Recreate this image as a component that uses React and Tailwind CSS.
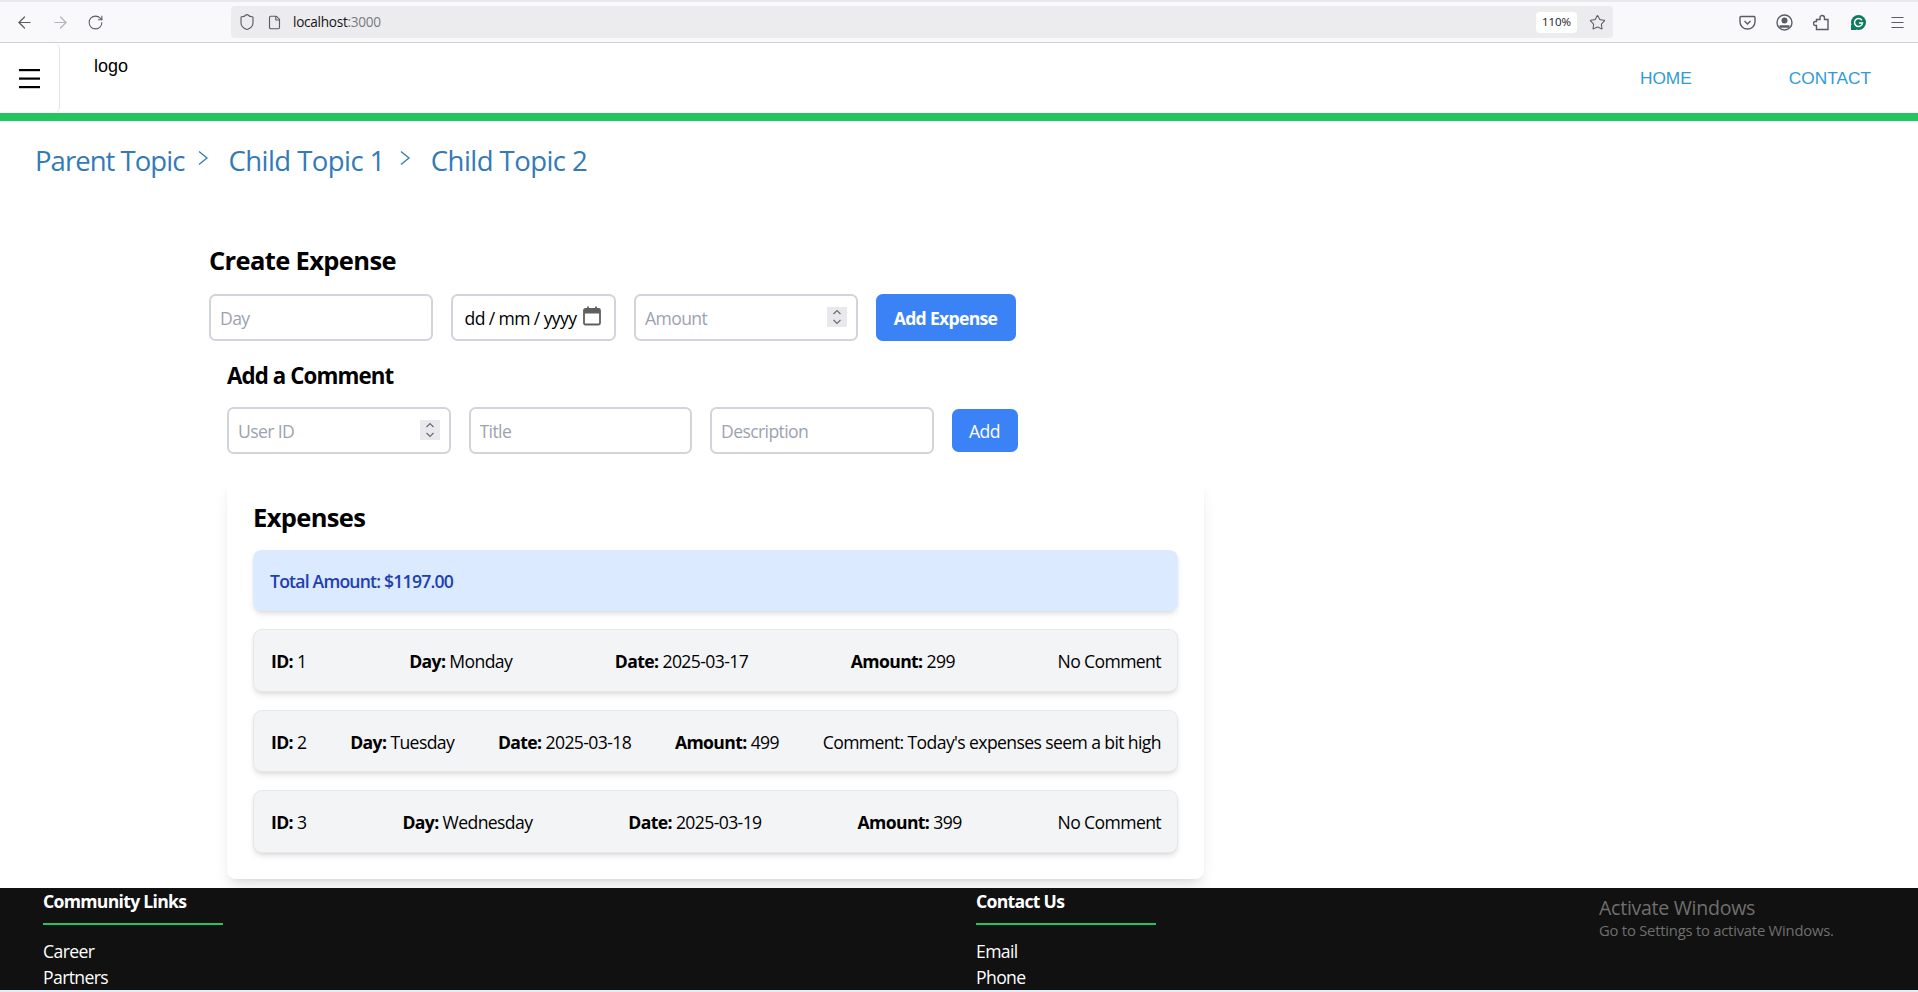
import { ArrowLeft, ArrowRight, RotateCw, Shield, File, Star, Menu } from 'lucide-react'

const sans = 'font-["Open_Sans",sans-serif]'

const expenses = [
  { id: 1, day: 'Monday', date: '2025-03-17', amount: 299, comment: 'No Comment' },
  { id: 2, day: 'Tuesday', date: '2025-03-18', amount: 499, comment: "Comment: Today's expenses seem a bit high" },
  { id: 3, day: 'Wednesday', date: '2025-03-19', amount: 399, comment: 'No Comment' },
]

function BrowserBar() {
  return (
    <div className="h-[43px] shrink-0 flex items-center bg-[#f9f9fb] border-t-2 border-t-[#e8e8ed] border-b border-b-[#cfcfd8] text-[#5b5b66]">
      <div className="w-[231px] flex items-center pl-[15px] gap-[17px]">
        <ArrowLeft size={19} strokeWidth={1.5} />
        <ArrowRight size={19} strokeWidth={1.5} className="text-[#b5b5bb]" />
        <RotateCw size={17} strokeWidth={1.5} />
      </div>
      <div className="w-[1382px] h-[32px] flex items-center bg-[#ececee] rounded-[4px] pl-[7px] pr-[7px]">
        <Shield size={18} strokeWidth={1.5} />
        <File size={15} strokeWidth={1.8} className="ml-[11px]" />
        <span className={`ml-[11px] text-[13.6px] text-[#15141a] tracking-[-0.02em] ${sans}`}>
          localhost<span className="text-[#7a7a80]">:3000</span>
        </span>
        <span className={`ml-auto w-[41px] h-[21px] flex items-center justify-center bg-white rounded-[4px] text-[11.5px] text-[#15141a] ${sans}`}>110%</span>
        <Star size={17} strokeWidth={1.5} className="ml-[12px]" />
      </div>
      <div className="flex-1 flex items-center pl-[126px] gap-[20px]">
        <svg width="17" height="17" viewBox="0 0 17 17" fill="none" stroke="currentColor" strokeWidth="1.4">
          <path d="M2 2.500h13a1 1 0 0 1 1 1V8a7.500 7 0 0 1-15 0V3.500a1 1 0 0 1 1-1z" />
          <path d="M5.500 7l3 3 3-3" />
        </svg>
        <svg width="17" height="17" viewBox="0 0 17 17" fill="none" stroke="currentColor" strokeWidth="1.4">
          <circle cx="8.500" cy="8.500" r="7.500" />
          <circle cx="8.500" cy="6.500" r="2.300" fill="currentColor" />
          <path d="M3.500 12.500h10" strokeWidth="2.500" />
        </svg>
        <svg width="17" height="17" viewBox="0 0 17 17" fill="none" stroke="currentColor" strokeWidth="1.4">
          <path d="M9 1.500c1.500 0 2.500 1 2.500 2.500v1.500h3.500v10H3.500v-4h-1a2 2 0 0 1 0-4h1v-2H7V3.500c0-1 .8-2 2-2z" />
        </svg>
        <svg width="17" height="17" viewBox="0 0 17 17">
          <circle cx="8.500" cy="8.500" r="7.500" fill="#0f7a5f" />
          <rect x="1" y="11" width="5" height="5" fill="#0f7a5f" />
          <path d="M11.800 6.200a4 4 0 1 0 .7 2.800H9" fill="none" stroke="#fff" strokeWidth="1.500" />
        </svg>
        <Menu size={17} strokeWidth={1.5} className="ml-[2px]" />
      </div>
    </div>
  )
}

function Header() {
  return (
    <div className="h-[70px] shrink-0 flex items-start bg-white font-['Liberation_Sans',sans-serif]">
      <div className="w-[60px] h-full flex items-center pl-[19px] border-r border-[#e5e5e5] rounded-r-[6px]">
        <svg width="21" height="20" viewBox="0 0 21 20" className="mt-[1px]">
          <rect y="0" width="21" height="2.200" />
          <rect y="8.500" width="21" height="2.200" />
          <rect y="17" width="21" height="2.200" />
        </svg>
      </div>
      <div className="ml-[34px] mt-[13px] text-[18px] leading-[20px] text-black">logo</div>
      <nav className="ml-auto mr-[47px] mt-[25px] flex gap-[97px] text-[17.3px] leading-[20px] text-[#2f9bd6]">
        <span>HOME</span>
        <span>CONTACT</span>
      </nav>
    </div>
  )
}

function Crumb() {
  return (
    <svg width="12" height="16" viewBox="0 0 12 16" fill="none" stroke="#337ab7" strokeWidth="1.300" className="mt-[-6px]">
      <path d="M2 1.500l8 6.500-8 6.500" />
    </svg>
  )
}

function Breadcrumb() {
  return (
    <div className="h-[80px] shrink-0 pl-[35px] pb-[1px] flex items-center self-start text-[27.500px] tracking-[-0.02em] leading-[40px] text-[#337ab7]">
      <span className="tracking-[-0.035em]">Parent Topic</span>
      <span className="ml-[13px] mr-[19px]"><Crumb /></span>
      <span>Child Topic 1</span>
      <span className="ml-[14px] mr-[20px]"><Crumb /></span>
      <span>Child Topic 2</span>
    </div>
  )
}

function Spinner() {
  return (
    <span className="absolute right-[11px] top-[13px] w-[20px] h-[20px] bg-[#e9e9ed] flex items-center justify-center">
      <svg width="10" height="18" viewBox="0 0 10 18" fill="none" stroke="#6b6b74" strokeWidth="1.200">
        <path d="M1.500 6L5 2.500 8.500 6M1.500 12L5 15.500 8.500 12" />
      </svg>
    </span>
  )
}

function Field({ placeholder, spin }) {
  return (
    <div className="relative h-[47px] w-[223.5px]">
      <input
        placeholder={placeholder}
        className="w-full h-full px-[9px] pt-[1px] border-2 border-[#d1d5db] rounded-[6.6px] bg-white text-[17.6px] tracking-[-0.035em] outline-none placeholder:text-[#9ca3af]"
      />
      {spin && <Spinner />}
    </div>
  )
}

function DateField() {
  return (
    <div className="w-[165.5px] h-[47px] flex items-center pl-[12px] border-2 border-[#d1d5db] rounded-[6.6px] bg-white text-[17.6px] tracking-[-0.035em] text-black">
      <span className="pt-[1px]">dd / mm / yyyy</span>
      <svg width="18" height="20" viewBox="0 0 18 20" className="ml-[7px] mt-[-4px]" fill="none" stroke="#5f5f5f" strokeWidth="1.800">
        <rect x="1" y="3" width="16" height="15.500" rx="1.500" />
        <path d="M1 5.500h16" strokeWidth="4" />
        <path d="M5 0.500v3M13 0.500v3" />
      </svg>
    </div>
  )
}

function ExpenseRow({ expense }) {
  return (
    <div className="h-[62.5px] flex items-center justify-between pl-[17px] pr-[16px] pt-[2px] bg-[#f3f4f6] border border-[#e5e7eb] rounded-[8.8px] shadow-[0_4px_6px_-1px_rgba(0,0,0,0.1),0_2px_4px_-2px_rgba(0,0,0,0.1)] text-[17.6px] tracking-[-0.035em] text-black">
      <span><b className="font-bold">ID:</b> {expense.id}</span>
      <span><b className="font-bold">Day:</b> {expense.day}</span>
      <span><b className="font-bold">Date:</b> {expense.date}</span>
      <span><b className="font-bold">Amount:</b> {expense.amount}</span>
      <span>{expense.comment}</span>
    </div>
  )
}

function FooterCol({ title, links, className }) {
  return (
    <div className={className}>
      <div className="text-[17.6px] font-bold tracking-[-0.04em] leading-[24px] text-white mt-[1px]">{title}</div>
      <div className="w-[180px] h-[2px] bg-[#22c55e] mt-[10px]" />
      <div className="mt-[13px] text-[17.6px] tracking-[-0.035em] leading-[26px] text-white">
        {links.map(link => <div key={link}>{link}</div>)}
      </div>
    </div>
  )
}

export default function App() {
  return (
    <div className={`h-[992px] w-[1918px] flex flex-col overflow-hidden bg-white ${sans}`}>
      <BrowserBar />
      <Header />
      <div className="h-[8px] shrink-0 bg-[#22c55e]" />
      <Breadcrumb />

      <div className="flex-1 min-h-0 pl-[209px] pt-[43px]">
        <h2 className="text-[25.5px] font-bold tracking-[-0.025em] leading-[32px] text-black">Create Expense</h2>
        <div className="mt-[18px] flex gap-[18px]">
          <Field placeholder="Day" />
          <DateField />
          <Field placeholder="Amount" spin />
          <button className="w-[140px] h-[47px] pt-[1px] bg-[#3b82f6] rounded-[6.6px] text-white text-[17.6px] font-bold tracking-[-0.04em]">Add Expense</button>
        </div>

        <div className="ml-[18px] w-[977px]">
          <h3 className="mt-[19px] text-[22.3px] font-bold tracking-[-0.04em] leading-[32px] text-black">Add a Comment</h3>
          <div className="mt-[15px] flex gap-[18px] items-center">
            <Field placeholder="User ID" spin />
            <Field placeholder="Title" />
            <Field placeholder="Description" />
            <button className="w-[66px] h-[43px] pt-[1px] bg-[#3b82f6] rounded-[6.6px] text-white text-[17.6px] tracking-[-0.035em]">Add</button>
          </div>

          <div className="mt-[25px] h-[400px] p-[26px] pt-[21px] bg-white rounded-[8.8px] shadow-[0_10px_15px_-3px_rgba(0,0,0,0.1),0_4px_6px_-4px_rgba(0,0,0,0.1)]">
            <h2 className="text-[25.5px] font-bold tracking-[-0.025em] leading-[34px] text-black">Expenses</h2>
            <div className="mt-[16px] h-[61px] flex items-center px-[17px] pt-[2px] bg-[#dbeafe] rounded-[8.8px] shadow-[0_4px_6px_-1px_rgba(0,0,0,0.1),0_2px_4px_-2px_rgba(0,0,0,0.1)] text-[17.6px] font-semibold tracking-[-0.045em] text-[#1e40af]">
              Total Amount: $1197.00
            </div>
            <div className="mt-[18px] flex flex-col gap-[18px]">
              {expenses.map(expense => <ExpenseRow key={expense.id} expense={expense} />)}
            </div>
          </div>
        </div>
      </div>

      <div className="relative h-[102px] shrink-0 flex bg-[#111111] pl-[43px]">
        <FooterCol title="Community Links" links={['Career', 'Partners']} className="w-[933px]" />
        <FooterCol title="Contact Us" links={['Email', 'Phone']} />
        <div className="absolute left-[1599px] top-[8px] text-[#6f6f6f]">
          <div className="text-[19.6px] leading-[24px] tracking-[-0.015em]">Activate Windows</div>
          <div className="text-[14.8px] leading-[20px] tracking-[-0.015em]">Go to Settings to activate Windows.</div>
        </div>
      </div>
      <div className="h-[2px] shrink-0 bg-[#e3ecf7]" />
    </div>
  )
}
